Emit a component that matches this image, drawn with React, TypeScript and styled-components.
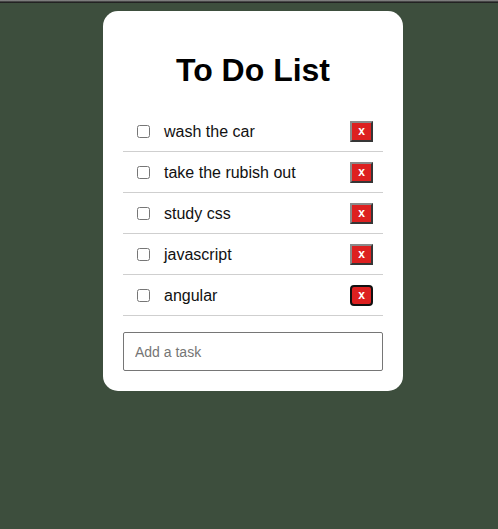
import React from "react";
import styled, { createGlobalStyle, css } from "styled-components";

const Global = createGlobalStyle`
  html, body { margin: 0; padding: 0; }
  body {
    background: #3d4e3d;
    font-family: "Liberation Sans", Arial, sans-serif;
    min-height: 529px;
  }
`;

const TopShade = styled.div`
  height: 3px;
  background: linear-gradient(to bottom, #9a9a9a 0%, #4a4a4a 45%, #111 100%);
`;

const Page = styled.div`
  display: flex;
  justify-content: center;
  padding: 8px 0 0 8px;
`;

const Card = styled.div`
  width: 260px;
  padding: 20px 20px 20px;
  background: #fff;
  border-radius: 15px;
`;

const Title = styled.h1`
  margin: 21px 0 22px;
  text-align: center;
  font-size: 32px;
  font-weight: bold;
  color: #000;
`;

const List = styled.ul`
  list-style: none;
  margin: 0 0 16px;
  padding: 0;
`;

const Row = styled.li`
  display: flex;
  align-items: center;
  height: 40px;
  padding: 0 10px 0 10px;
  border-bottom: 1px solid #cfcfcf;
`;

const Check = styled.input`
  width: 13px;
  height: 13px;
  margin: 1px 3px 0 4px;
`;

const Label = styled.span`
  flex: 1;
  margin-left: 11px;
  padding-top: 1px;
  font-size: 16px;
  color: #111;
`;

const Delete = styled.button<{ $focused?: boolean }>`
  width: 23px;
  height: 21px;
  padding: 0;
  background: #dd2020;
  color: #fff;
  font-family: "Liberation Sans", Arial, sans-serif;
  font-size: 12px;
  font-weight: bold;
  line-height: 1;
  border: 2px outset #8a8a8a;
  border-radius: 0;
  ${(p) =>
    p.$focused &&
    css`
      border: 2px solid #111;
      border-radius: 4px;
    `}
`;

const TaskInput = styled.input`
  display: block;
  box-sizing: border-box;
  width: 260px;
  height: 39px;
  padding: 0 11px;
  border: 1px solid #767676;
  border-radius: 2px;
  font-family: "Liberation Sans", Arial, sans-serif;
  font-size: 14px;
  &::placeholder { color: #757575; }
`;

const tasks = ["wash the car", "take the rubish out", "study css", "javascript", "angular"];

export default function App() {
  return (
    <>
      <Global />
      <TopShade />
      <Page>
        <Card>
          <Title>To Do List</Title>
          <List>
            {tasks.map((t, i) => (
              <Row key={t}>
                <Check type="checkbox" />
                <Label>{t}</Label>
                <Delete $focused={i === tasks.length - 1}>x</Delete>
              </Row>
            ))}
          </List>
          <TaskInput placeholder="Add a task" />
        </Card>
      </Page>
    </>
  );
}
